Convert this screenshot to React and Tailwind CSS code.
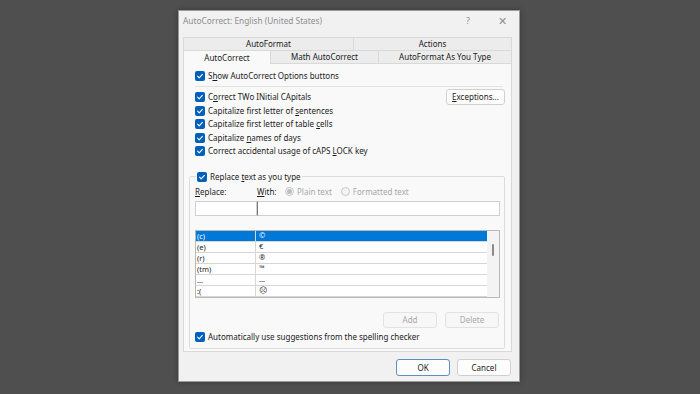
import React from "react";

const F = { fontFamily: '"Noto Sans", "Open Sans", Arial, sans-serif' };

function Check({ className = "" }) {
  return (
    <span className={"flex h-[10px] w-[10px] shrink-0 items-center justify-center rounded-[2px] bg-[#005fb8] " + className}>
      <svg width="8" height="8" viewBox="0 0 8 8">
        <path d="M1.6 4.2 L3.2 5.8 L6.4 2.4" fill="none" stroke="#fff" strokeWidth="1.1" strokeLinecap="round" strokeLinejoin="round" />
      </svg>
    </span>
  );
}

function CheckRow({ children, className = "" }) {
  return (
    <div className={"flex h-[13.5px] items-center gap-[3px] " + className}>
      <Check />
      <span className="text-[8px] leading-none text-[#1b1b1b]">{children}</span>
    </div>
  );
}

function Radio({ label }) {
  return (
    <span className="flex items-center gap-[3px] text-[#a8a8a8]">
      <span className="flex h-[9px] w-[9px] items-center justify-center rounded-full border border-[#c8c8c8] bg-[#f4f4f4]">
        {label === "Plain text" ? <span className="h-[5px] w-[5px] rounded-full bg-[#bdbdbd]" /> : null}
      </span>
      {label}
    </span>
  );
}

const rows = [
  ["(c)", "©"],
  ["(e)", "€"],
  ["(r)", "®"],
  ["(tm)", "™"],
  ["...", "…"],
  [":(", "☹"],
];

export default function App() {
  return (
    <div style={F} className="flex h-[394px] w-[700px] items-start bg-[#4f4f4f] pl-[178px] pt-[10px]">
      <div className="flex h-[372px] w-[342px] flex-col border border-[#9a9a9a] bg-[#f1f1f1] shadow-[0_0_6px_rgba(0,0,0,0.3)]">
        {/* title bar */}
        <div className="flex h-[20px] items-center pl-[4px] text-[8.3px] text-[#8e8e8e]">
          <span className="flex-1">AutoCorrect: English (United States)</span>
          <span className="w-[34px] text-center text-[9px]">?</span>
          <span className="w-[34px] text-center text-[11px] font-light">✕</span>
        </div>
        {/* tabs */}
        <div className="mt-[6px] ml-[4px] w-[329px] text-[8px] text-[#1b1b1b]">
          <div className="flex h-[13px]">
            <div className="flex w-[171px] items-center justify-center border border-b-0 border-[#d9d9d9] bg-[#ececec]">AutoFormat</div>
            <div className="flex flex-1 items-center justify-center border border-b-0 border-l-0 border-[#d9d9d9] bg-[#ececec]">Actions</div>
          </div>
          <div className="flex h-[14px]">
            <div className="flex w-[88px] items-center justify-center border border-b-0 border-[#d9d9d9] bg-[#f9f9f9]">AutoCorrect</div>
            <div className="flex w-[108px] items-center justify-center border-t border-r border-b border-[#d9d9d9] bg-[#ececec]">Math AutoCorrect</div>
            <div className="flex flex-1 items-center justify-center border-t border-r border-b border-[#d9d9d9] bg-[#ececec]">AutoFormat As You Type</div>
          </div>
          {/* panel */}
          <div className="flex h-[288px] flex-col border border-t-0 border-[#d9d9d9] bg-[#f9f9f9] pl-[11px] pr-[6px]">
            <CheckRow className="mt-[5px]">S<u>h</u>ow AutoCorrect Options buttons</CheckRow>
            <div className="mt-[3px] mr-[2px] h-px bg-[#e2e2e2]" />
            <div className="mt-[4px] flex">
              <div className="flex flex-1 flex-col">
                <CheckRow>C<u>o</u>rrect TWo INitial CApitals</CheckRow>
                <CheckRow>Capitalize first letter of <u>s</u>entences</CheckRow>
                <CheckRow>Capitalize first letter of table <u>c</u>ells</CheckRow>
                <CheckRow>Capitalize <u>n</u>ames of days</CheckRow>
                <CheckRow>Correct accidental usage of cAPS <u>L</u>OCK key</CheckRow>
              </div>
              <div className="mt-[-2px] flex h-[16px] w-[59px] items-center justify-center rounded-[3px] border border-[#d0d0d0] bg-[#fdfdfd] text-[8px] text-[#1b1b1b]">
                <span><u>E</u>xceptions...</span>
              </div>
            </div>
            {/* group */}
            <fieldset className="mt-[12px] ml-[-6px] rounded-[2px] border border-[#dcdcdc] pb-[4px] pl-[5px] pr-[4px]">
              <legend className="ml-[1px] px-[1px]">
                <CheckRow>Replace <u>t</u>ext as you type</CheckRow>
              </legend>
              <div className="mt-[3px] flex h-[10px] items-center text-[8px] text-[#1b1b1b]">
                <span className="w-[62px]"><u>R</u>eplace:</span>
                <span className="w-[28px]"><u>W</u>ith:</span>
                <Radio label="Plain text" />
                <span className="w-[9px]" />
                <Radio label="Formatted text" />
              </div>
              <div className="mt-[4px] flex h-[15px]">
                <div className="w-[62px] border border-[#cfcfcf] bg-white" />
                <div className="flex-1 border border-l-[#7a7a7a] border-[#cfcfcf] bg-white" />
              </div>
              <div className="mt-[14px] flex h-[68px] border border-[#b9b9b9] bg-white text-[7.5px] text-[#1b1b1b]">
                <div className="flex flex-1 flex-col">
                  {rows.map(([a, b], i) => (
                    <div key={i} className={"flex h-[11px] items-center border-b border-[#d6d6d6] " + (i === 0 ? "bg-[#0078d7] text-white" : "")}>
                      <span className="h-full w-[60px] border-r border-[#d6d6d6] pl-[1px] leading-[11px]">{a}</span>
                      <span className="pl-[3px] leading-[11px]">{b}</span>
                    </div>
                  ))}
                </div>
                <div className="flex w-[12px] justify-center bg-[#f3f3f3]">
                  <div className="mt-[13px] h-[12px] w-[2px] rounded bg-[#8a8a8a]" />
                </div>
              </div>
              <div className="mt-[14px] flex justify-end gap-[8px] pr-[1px]">
                <div className="flex h-[16px] w-[54px] items-center justify-center rounded-[3px] border border-[#e3e3e3] bg-[#f7f7f7] text-[8px] text-[#a8a8a8]">Add</div>
                <div className="flex h-[16px] w-[54px] items-center justify-center rounded-[3px] border border-[#e3e3e3] bg-[#f7f7f7] text-[8px] text-[#a8a8a8]">Delete</div>
              </div>
              <CheckRow className="mt-[3px]">Automatically use suggestions from the spelling checker</CheckRow>
            </fieldset>
          </div>
        </div>
        {/* footer */}
        <div className="mt-[7px] flex justify-end gap-[7px] pr-[8px]">
          <div className="flex h-[17px] w-[54px] items-center justify-center rounded-[3px] border border-[#5d8fc0] bg-[#fdfdfd] text-[8px] text-[#1b1b1b]">OK</div>
          <div className="flex h-[17px] w-[54px] items-center justify-center rounded-[3px] border border-[#d0d0d0] bg-[#fdfdfd] text-[8px] text-[#1b1b1b]">Cancel</div>
        </div>
      </div>
    </div>
  );
}
